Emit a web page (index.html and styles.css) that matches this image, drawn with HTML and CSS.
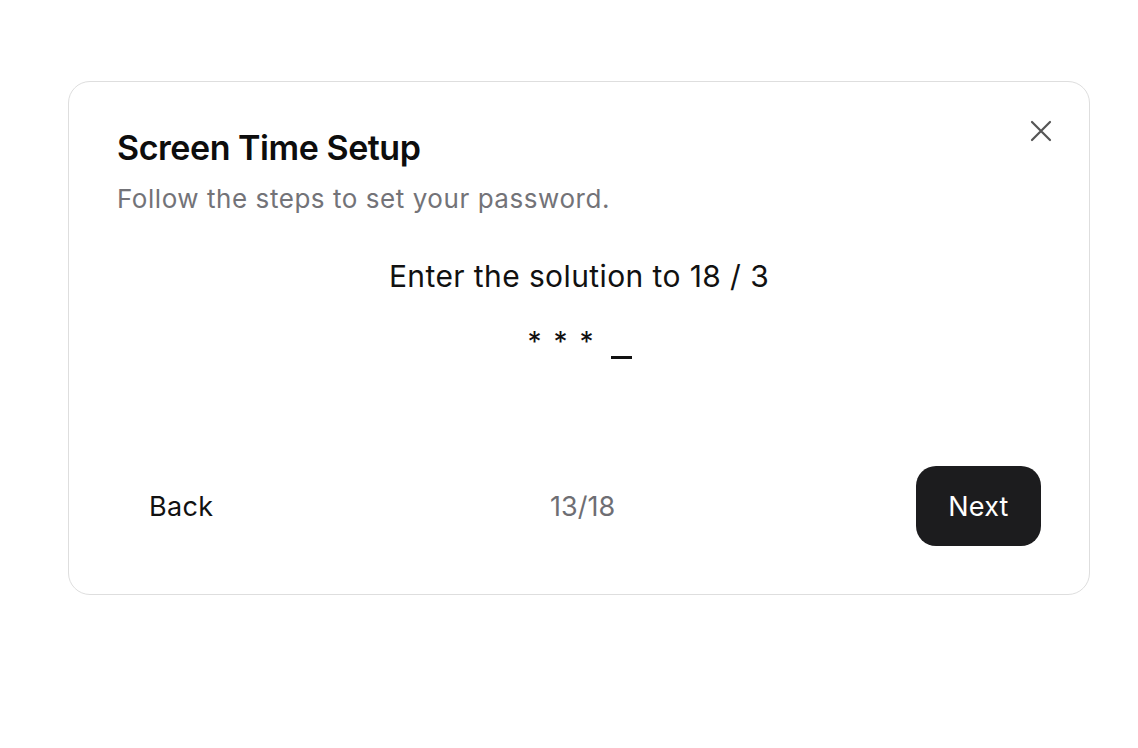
FILE: index.html
```html
<!DOCTYPE html>
<html>
<head>
<meta charset="utf-8">
<link rel="stylesheet" href="styles.css">
</head>
<body>
<div class="page">
  <div class="card">
    <button class="close" aria-label="Close">
      <svg width="22" height="22" viewBox="0 0 22 22"><path d="M2 2 L20 20 M20 2 L2 20" stroke="#555" stroke-width="2.2" stroke-linecap="round" fill="none"/></svg>
    </button>
    <div class="header">
      <h1 class="title">Screen Time Setup</h1>
      <p class="subtitle">Follow the steps to set your password.</p>
    </div>
    <div class="body">
      <p class="prompt">Enter the solution to 18 / 3</p>
      <div class="entry"><span class="stars">* * *</span><span class="cursor"></span></div>
    </div>
    <div class="footer">
      <button class="btn back">Back</button>
      <span class="progress">13/18</span>
      <button class="btn next">Next</button>
    </div>
  </div>
</div>
</body>
</html>
```

FILE: styles.css
```css
* { box-sizing: border-box; }
html, body { margin: 0; padding: 0; background: #fff; }
body { font-family: Inter, "Noto Sans", "Liberation Sans", sans-serif; color: #111; }
.page { padding: 81px 0 0 68px; }
.card {
  position: relative;
  width: 1022px;
  height: 514px;
  border: 1px solid #dedede;
  border-radius: 22px;
  padding: 43px 48px 48px 48px;
  display: flex;
  flex-direction: column;
}
.close {
  position: absolute;
  top: 38px;
  right: 37px;
  background: none;
  border: 0;
  padding: 0;
  width: 22px;
  height: 22px;
  cursor: pointer;
}
.title {
  margin: 0;
  font-size: 34px;
  font-weight: 600;
  letter-spacing: -0.45px;
  line-height: 46px;
  color: #0d0d0d;
}
.subtitle {
  margin: 11px 0 0 0;
  font-size: 26px;
  line-height: 34px;
  color: #737378;
  letter-spacing: 0.55px;
}
.body {
  display: flex;
  flex-direction: column;
  align-items: center;
  margin-top: 41px;
}
.prompt {
  margin: 0;
  font-size: 30px;
  line-height: 38px;
  letter-spacing: 0.4px;
  color: #111;
}
.entry {
  margin-top: 30px;
  display: flex;
  align-items: flex-end;
  gap: 16px;
  height: 40px;
  margin-left: 2px;
}
.stars {
  font-size: 28px;
  line-height: 28px;
  letter-spacing: 2px;
  align-self: flex-start;
  padding-top: 3px;
}
.cursor {
  display: block;
  width: 21px;
  height: 3px;
  background: #111;
  margin-bottom: 6px;
}
.footer {
  margin-top: auto;
  display: flex;
  align-items: center;
  justify-content: space-between;
}
.btn {
  font-family: inherit;
  font-size: 27px;
  border: 0;
  border-radius: 20px;
  height: 80px;
  padding: 0 32px;
  cursor: pointer;
}
.back { background: transparent; color: #111; letter-spacing: 0.3px; }
.next { background: #1c1c1e; color: #fff; width: 125px; padding: 0; letter-spacing: 0.2px; }
.progress {
  font-size: 27px;
  color: #6e6e73;
  margin-left: 4px;
}
```
